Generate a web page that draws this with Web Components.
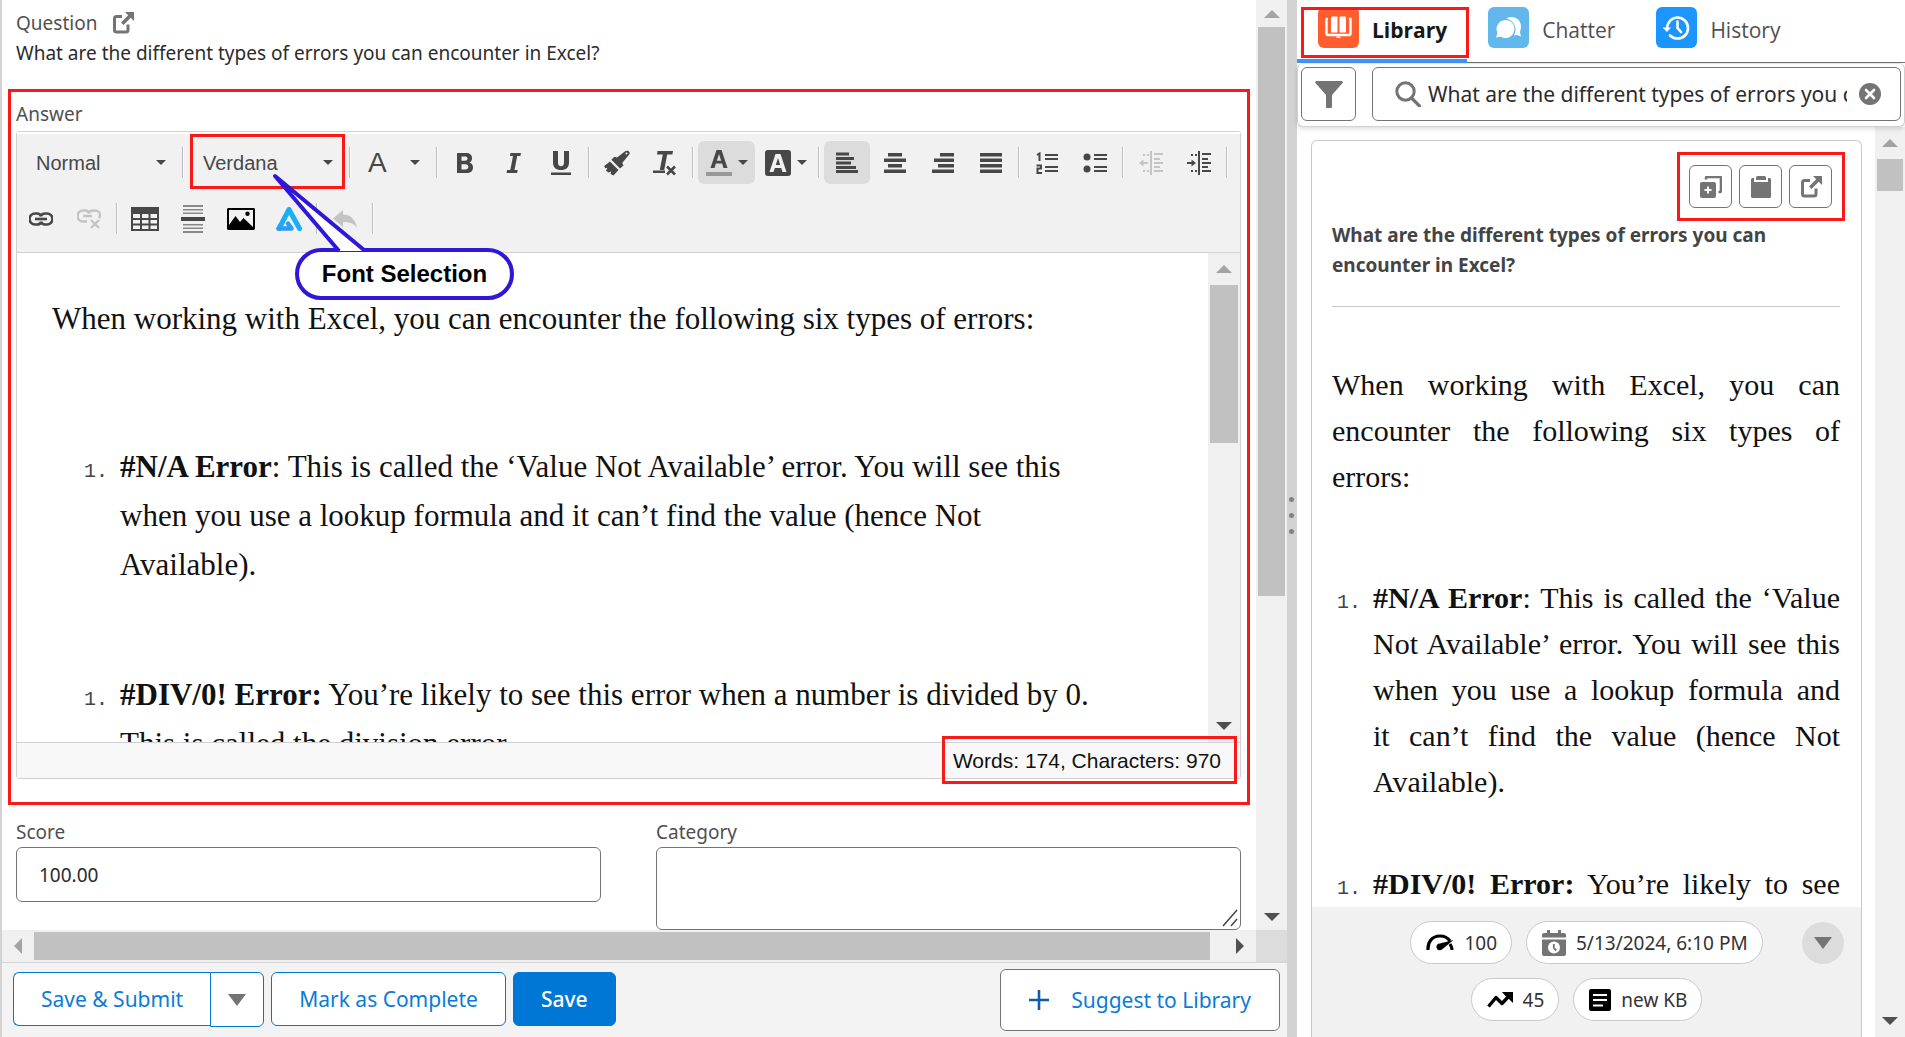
<!DOCTYPE html>
<html lang="en">
<head>
<meta charset="utf-8">
<title>Answer editor</title>
<style>
  html, body { margin: 0; height: 100%; }
  body { font-family: "Noto Sans", "Open Sans", sans-serif; color: #222; background: #fff; overflow: hidden; }
</style>
</head>
<body>
<app-shell>
  <question-panel slot="main"></question-panel>
  <library-panel slot="side"></library-panel>
</app-shell>

<script>
const ICONS = {
  popout: ['0 0 22 22', '<path d="M10 4.500H4.500a2 2 0 0 0-2 2V18a2 2 0 0 0 2 2H14a2 2 0 0 0 2-2v-5.500" fill="none" stroke="currentColor" stroke-width="3"/><path d="M13 0h9v9l-3.200-3.200L11.500 13 9 10.500l7.200-7.300z"/>'],
  caret: ['0 0 10 5', '<path d="M0 0h10L5 5z"/>'],
  bigcaret: ['0 0 18 12', '<path d="M0 0h18L9 12z"/>'],
  grip: ['0 0 16 18', '<path d="M1 17L15 1M9 17l6-7" fill="none" stroke="currentColor" stroke-width="1.500"/>'],
  bold: ['0 0 22 22', '<path fill-rule="evenodd" d="M3 1h9c4 0 6 2 6 5.200 0 2-1 3.700-2.700 4.300 2.400.6 3.700 2.500 3.700 4.900C19 19 16.500 21 12.500 21H3zM7.500 4.500v4.300h3.300c1.800 0 2.700-.7 2.700-2.200s-.9-2.100-2.700-2.100zm0 7.700v5.200h3.800c2 0 3-.9 3-2.600s-1-2.600-3-2.600z"/>'],
  italic: ['0 0 22 22', '<path d="M8.500 1H19l-.6 3h-3.200l-2.700 14h3.200l-.6 3H4.500l.6-3h3.200L11 4H7.900z"/>'],
  underline: ['0 0 22 24', '<path d="M3 0h5v11c0 3 1 4.200 3 4.200s3-1.200 3-4.200V0h5v11.500c0 5-3 7.500-8 7.500s-8-2.500-8-7.500zM1 21.500h20V24H1z"/>'],
  brush: ['0 0 26 26', '<path d="M23 .8a2.300 2.300 0 0 1 2.200 3.600l-7 8.600 1.300 2.500-3.500 3-8.600-8.700 3-3 2.700.7 8-6.200c.5-.4 1.200-.6 1.900-.5z"/><path d="M6 11.500l8.500 8.600-5 5.400-3-1.500.6-2.400-2.700 1L2 20.500l1.500-2.700-2.300.4L.2 16z"/><circle cx="22.500" cy="3.500" r="1" fill="#fff"/>'],
  clear: ['0 0 24 26', '<path d="M4.500 1H20l-.6 3.500h-5.200L11.200 20H6.800L9.800 4.500H4z"/><path d="M0 20.500h12V23H0z"/><path d="M14 16.500l8 8m0-8l-8 8" stroke="currentColor" stroke-width="2.600"/>'],
  fore: ['0 0 26 26', '<path fill-rule="evenodd" d="M10.500 0h5L21.500 18h-4l-1.400-4.500H9.800L8.500 18h-4zM13 4l-2.200 6.700h4.400z"/><path fill="#999" d="M0 22h26v4H0z"/>'],
  back: ['0 0 26 26', '<path fill-rule="evenodd" d="M3 0h20q3 0 3 3v20q0 3-3 3H3q-3 0-3-3V3q0-3 3-3zM10.500 4L4.500 22h4l1.300-4h6.400l1.300 4h4L15.500 4zM13 8l2.200 7h-4.400z"/>'],
  left: ['0 0 22 22', '<path d="M0 1h13v3H0zM0 5.500h18v3H0zM0 10h15v3H0zM0 14.500h20v3H0zM0 18.500h22v3H0z" transform="translate(0 -.5)"/>'],
  center: ['0 0 22 22', '<path d="M4 1h14v3.500H4zM0 6.500h22V10H0zM4 12h14v3.500H4zM0 17.500h22V21H0z"/>'],
  right: ['0 0 22 22', '<path d="M8 1h14v3.500H8zM2 6.500h20V10H2zM6 12h16v3.500H6zM0 17.500h22V21H0z"/>'],
  justify: ['0 0 22 22', '<path d="M0 1h22v3.500H0zM0 6.500h22V10H0zM0 12h22v3.500H0zM0 17.500h22V21H0z"/>'],
  numbers: ['0 0 22 22', '<path d="M9 2h13v2H9zM9 6h13v2H9zM9 14h13v2H9zM9 18h13v2H9z"/><path d="M1 3l2.500-1.500V9M.5 13.500H5v3H1.500V21H6" fill="none" stroke="currentColor" stroke-width="2"/>'],
  bullets: ['0 0 24 22', '<path d="M11 2h13v2H11zM11 6h13v2H11zM11 14h13v2H11zM11 18h13v2H11z"/><circle cx="4" cy="5" r="3.500"/><circle cx="4" cy="17" r="3.500"/>'],
  outdent: ['0 0 24 24', '<path d="M11 0h2v24h-2zM15 2h9v2h-9zM15 7h6v2h-6zM15 11h9v2h-9zM15 15h6v2h-6zM15 19h9v2h-9zM4 3h2v2H4zM8 3h2v2H8zM4 19h2v2H4zM8 19h2v2H8zM0 12l4.500-3.500V11H9v2H4.500v2.500z"/>'],
  indent: ['0 0 24 24', '<path d="M11 0h2v24h-2zM15 2h9v2h-9zM15 7h6v2h-6zM15 11h9v2h-9zM15 15h6v2h-6zM15 19h9v2h-9zM4 3h2v2H4zM8 3h2v2H8zM4 19h2v2H4zM8 19h2v2H8zM9 12L4.500 8.500V11H0v2h4.500v2.500z"/>'],
  link: ['0 0 24 14', '<g fill="none" stroke="currentColor" stroke-width="2.600"><path d="M12 4.500C11.500 2.500 10 1.500 8 1.500H6a5 5 0 0 0 0 11h2c2 0 3.500-1 4-2.500M12 9.500c.5 2 2 3 4 3h2a5 5 0 0 0 0-11h-2c-2 0-3.500 1-4 2.500"/><path d="M6 7h12"/></g>'],
  unlink: ['0 0 24 20', '<g fill="none" stroke="currentColor" stroke-width="2.400"><path d="M12 4.500C11.500 2.500 10 1.500 8 1.500H6a5 5 0 0 0 0 11h4M12 4c.5-1.500 2-2.500 4-2.500h2c3 0 5 2 5 4.500 0 1.500-.5 2.500-1 3M6 7h9"/><path d="M14 11l8 8m0-8l-8 8"/></g>'],
  table: ['0 0 28 24', '<path fill-rule="evenodd" d="M0 0h28v24H0zM2 7v4h7V7zm9 0v4h6.500V7zm8.500 0v4H26V7zM2 13v3.500h7V13zm9 0v3.500h6.500V13zm8.500 0v3.500H26V13zM2 18.500V22h7v-3.500zm9 0V22h6.500v-3.500zm8.500 0V22H26v-3.500z"/>'],
  rule: ['0 0 24 28', '<path fill="#888" d="M2 0h20v2H2zM2 4h20v1.500H2zM2 7.500h20V9H2zM2 19h20v1.500H2zM2 22.500h20V24H2zM2 26h20v2H2z"/><path d="M0 12h24v4H0z"/>'],
  image: ['0 0 28 22', '<path fill="#000" fill-rule="evenodd" d="M1 0h26l1 1v20l-1 1H1l-1-1V1zM2 2v15l6.500-9 4.500 6 3.500-4L26 19V2z"/><circle cx="20.500" cy="5.800" r="2.200" fill="#000"/>'],
  brand: ['0 0 26 24', '<path d="M13 2.500L3 21.500M13 2.500l10.500 19" stroke="#18aef8" stroke-width="5" stroke-linecap="round" fill="none"/><path d="M2.500 21.500h13l-3.500-5" stroke="#2f9bf4" stroke-width="4.500" stroke-linecap="round" stroke-linejoin="round" fill="none"/>'],
  undo: ['0 0 24 18', '<path d="M10 0v4.500c7 0 12 4 14 13-4-4.500-8-5.500-14-5.500V17L0 8.500z"/>'],
  library: ['0 0 41 41', '<rect width="41" height="41" rx="6" fill="#ff5d2d"/><g fill="#fff"><rect x="13" y="9.500" width="6.500" height="16" rx="1"/><rect x="21.500" y="9.500" width="6.500" height="16" rx="1"/><path d="M18.500 29.500h4v1.500h-4z"/></g><path d="M9 12h-.5v14.500c0 1 .5 1.500 1.500 1.500h21c1 0 1.500-.5 1.500-1.500V12H32" fill="none" stroke="#fff" stroke-width="2.400" stroke-linecap="round"/>'],
  chatter: ['0 0 41 41', '<rect width="41" height="41" rx="6" fill="#62b7ed"/><path d="M18.500 11.500c6-4 14.500 0 14.500 8 0 3-1 4-1 6l1 4-4-1.500-3 .5c4-7 0-15-7.500-17z" fill="#fff"/><path d="M17 13a9 9 0 1 1-4.500 16.500l-4.500 1 1.500-4.500A9 9 0 0 1 17 13z" fill="#fff"/>'],
  history: ['0 0 41 41', '<rect width="41" height="41" rx="6" fill="#1b96ff"/><path d="M11 22c0-7 5-11.500 10.500-11.500S32 15 32 21s-4.500 10.500-10.500 10.500c-3 0-5.500-1-7.500-3M21.500 14.500V21l3.500 4" fill="none" stroke="#fff" stroke-width="2.600" stroke-linecap="round"/><path d="M6.500 20.500h8.500L11 25z" fill="#fff"/>'],
  filter: ['0 0 28 27', '<path d="M1 0h26l1 1.500L17 14v12a1 1 0 0 1-1 1h-4a1 1 0 0 1-1-1V14L0 1.500z"/>'],
  search: ['0 0 26 26', '<circle cx="10.500" cy="10.500" r="8.700" fill="none" stroke="currentColor" stroke-width="3"/><path d="M16.500 17l8 8" stroke="currentColor" stroke-width="3.200" stroke-linecap="round"/>'],
  close: ['0 0 22 22', '<circle cx="11" cy="11" r="11"/><path d="M7 7l8 8m0-8l-8 8" stroke="#fff" stroke-width="2.600" stroke-linecap="round"/>'],
  copyadd: ['0 0 22 22', '<path d="M6 3.500V2a1 1 0 0 1 1-1h13a1 1 0 0 1 1 1v13a1 1 0 0 1-1 1h-1.500" fill="none" stroke="currentColor" stroke-width="2.600"/><path fill-rule="evenodd" d="M2 6h12a2 2 0 0 1 2 2v12a2 2 0 0 1-2 2H2a2 2 0 0 1-2-2V8a2 2 0 0 1 2-2zm5 4.500V13H4.500v2H7v2.500h2V15h2.500v-2H9v-2.500z"/>'],
  clipboard: ['0 0 22 22', '<path d="M7.500 0h7a1.500 1.500 0 0 1 1.500 1.500V4H6V1.500A1.500 1.500 0 0 1 7.500 0z"/><path d="M2.500 2H4v4h14V2h1.500A1.500 1.500 0 0 1 21 3.500v17a1.500 1.500 0 0 1-1.500 1.500h-17A1.500 1.500 0 0 1 1 20.500v-17A1.500 1.500 0 0 1 2.500 2z"/>'],
  gauge: ['0 0 28 18', '<path d="M2 16C1.500 8 6 2 14 2c5 0 8 2 10 5" fill="none" stroke="#000" stroke-width="3.200"/><path d="M27.500 6L16 15.500a3.400 3.400 0 1 1-2-6z" fill="#000"/><path d="M24 10c1.200 2 2 4 2 6" stroke="#000" stroke-width="3.200" fill="none"/>'],
  date: ['0 0 24 26', '<path d="M5 0h3v3h8V0h3v3h3a2 2 0 0 1 2 2v2.500H0V5a2 2 0 0 1 2-2h3z"/><path d="M0 9.500h24V24a2 2 0 0 1-2 2H2a2 2 0 0 1-2-2z"/><circle cx="12" cy="17.500" r="6" fill="#fff"/><path d="M11.800 14v4l2.500 2.500" fill="none" stroke="currentColor" stroke-width="1.800"/>'],
  trend: ['0 0 26 16', '<path d="M1.500 14.500l7.500-9 6 6 7-7.500" fill="none" stroke="#000" stroke-width="3.400" stroke-linejoin="round"/><path d="M15 0h11v11l-3.500-3.500L18.500 4z" fill="#000"/>'],
  article: ['0 0 22 22', '<path fill="#000" fill-rule="evenodd" d="M2 0h18a2 2 0 0 1 2 2v18a2 2 0 0 1-2 2H2a2 2 0 0 1-2-2V2a2 2 0 0 1 2-2zm2 5v2h14V5zm0 5v2h14v-2zm0 5.500v2h10v-2z"/>'],
  plus: ['0 0 20 20', '<path d="M8.700 0h2.600v8.700H20v2.600h-8.700V20H8.700v-8.700H0V8.700h8.700z"/>'],
};

const define = (name, markup) => customElements.define(name, class extends HTMLElement {
  constructor() {
    super();
    const t = document.createElement('template');
    t.innerHTML = typeof markup === 'function' ? markup(this) : markup;
    this.attachShadow({ mode: 'open' }).append(t.content);
  }
});

define('ui-icon', el => {
  const [box, body] = ICONS[el.getAttribute('name')];
  const w = el.getAttribute('w') || box.split(' ')[2];
  return `<style>:host{display:inline-flex;flex:none}svg{display:block;fill:currentColor}</style>
  <svg width="${w}" viewBox="${box}" aria-hidden="true">${body}</svg>`;
});

define('scroll-bar', el => {
  const v = !el.hasAttribute('horizontal');
  return `<style>
  :host{display:flex;flex-direction:${v ? 'column' : 'row'};background:#f0f0f0;flex:none;box-sizing:border-box;
    ${v ? 'width:var(--size,30px)' : 'height:32px'}}
  button{border:0;padding:0;background:none;flex:none;display:flex;align-items:center;justify-content:center;
    ${v ? 'height:var(--cap,32px);width:100%' : 'width:32px;height:100%'};color:#a3a3a3}
  button:last-child{color:#505050}
  .track{flex:1;display:flex;flex-direction:inherit;min-height:0;min-width:0}
  .thumb{background:#c1c1c1;${v ? 'margin:0 2px;height' : 'margin:2px 0;width'}:var(--thumb)}
  </style>
  <button type="button" tabindex="-1" aria-label="Scroll back"><svg width="16" height="16" fill="currentColor"><path d="${v ? 'M0 12h16L8 4z' : 'M12 0v16L4 8z'}"/></svg></button>
  <div class="track"><div class="thumb"></div></div>
  <button type="button" tabindex="-1" aria-label="Scroll forward"><svg width="16" height="16" fill="currentColor"><path d="${v ? 'M0 4h16l-8 8z' : 'M4 0v16l8-8z'}"/></svg></button>`;
});

define('mark-frame', `<style>:host{position:absolute;border:3px solid #fb1818;pointer-events:none;z-index:2}</style>`);

define('call-out', `<style>
  :host{position:absolute;z-index:3;pointer-events:none;width:219px;height:52px}
  .bubble{box-sizing:border-box;width:100%;height:100%;border:4px solid #2f17d8;border-radius:26px;background:#fff;color:#000;
    display:flex;align-items:center;justify-content:center;font:bold 24px "Liberation Sans",sans-serif}
  svg{position:absolute;left:-24px;bottom:100%;margin-bottom:-5px;overflow:visible}
  </style>
  <div class="bubble"><slot></slot></div>
  <svg width="94" height="80" viewBox="0 0 94 80"><path d="M4 3L69 78H92z" fill="#fff"/><path d="M68 78L4 3 93 77" fill="none" stroke="#2f17d8" stroke-width="4" stroke-linejoin="round"/></svg>`);

define('tool-button', el => `<style>
  :host{display:block;flex:none}
  button{box-sizing:border-box;width:${el.hasAttribute('menu') ? 57 : 46}px;height:43px;border:0;padding:0;border-radius:6px;background:${el.hasAttribute('on') ? '#dcdcdc' : 'none'};
    color:#474747;display:flex;align-items:center;justify-content:center;gap:6px}
  :host([off]) button{color:#c4c4c4}
  </style>
  <button type="button" aria-label="${el.getAttribute('label')}"${el.hasAttribute('off') ? ' disabled' : ''}><ui-icon name="${el.getAttribute('icon')}"></ui-icon>${el.hasAttribute('menu') ? '<ui-icon name="caret"></ui-icon>' : ''}</button>`);

define('tool-divider', `<style>:host{display:block;flex:none;width:2px;height:31px;margin:0 2px;background:linear-gradient(90deg,#bcbcbc 1px,#fff 1px)}</style>`);

define('tool-select', el => `<style>
  :host{display:flex;position:relative;flex:none;width:var(--w,157px);height:43px;color:#474747}
  select{appearance:none;width:100%;border:0;background:none;color:inherit;padding:0 30px 0 var(--inset,15px);font:${el.getAttribute('size') || 20}px "Liberation Sans",sans-serif}
  ui-icon{position:absolute;right:12px;top:19px;pointer-events:none}
  </style>
  <select aria-label="${el.getAttribute('label')}"><option>${el.getAttribute('value')}</option></select><ui-icon name="caret"></ui-icon><slot></slot>`);

define('kb-article', `<style>
  :host{display:block;font-family:"Liberation Serif",serif;color:#111}
  p{margin:0}
  ol{margin:var(--first-gap) 0 0;padding:0 0 0 var(--indent)}
  ol+ol{margin-top:var(--next-gap)}
  li::marker{font:20px "Liberation Mono",monospace;color:#444}
  </style>
  <p>When working with Excel, you can encounter the following six types of errors:</p>
  <ol><li><b>#N/A Error</b>: This is called the ‘Value Not Available’ error. You will see this when you use a lookup formula and it&nbsp;can’t find the value (hence Not Available).</li></ol>
  <ol><li><b>#DIV/0! Error:</b> You’re likely to see this error when a number is divided by 0. This is called the division error.</li></ol>`);

define('rich-editor', `<style>
  :host{display:block;border:1px solid #d1d1d1;border-radius:3px;position:relative}
  .tools{background:#f1f1f1;border-top:2px solid #fff;border-bottom:1px solid #d1d1d1;padding:7px 0 12px 1px;display:flex;flex-direction:column;gap:13px}
  .row{display:flex;align-items:center;gap:2px}
  .body{display:flex;height:489px}
  .text{flex:1;min-width:0;overflow:hidden;padding:41px 108px 0 35px;box-sizing:border-box}
  kb-article{font-size:31px;line-height:49px;--first-gap:99px;--next-gap:81px;--indent:68px}
  scroll-bar{--size:32px;--thumb:158px}
  .status{position:relative;border-top:1px solid #d1d1d1;background:#f8f8f8;height:35px;display:flex;align-items:center;justify-content:flex-end;
    padding-right:19px;font:21px "Liberation Sans",sans-serif;color:#111}
  .status mark-frame{left:calc(100% - 298px);right:3px;top:-7px;bottom:-6px}
  tool-select mark-frame{inset:-7px 0 -5px 2px}
  call-out{left:278px;top:116px}
  </style>
  <div class="tools">
    <div class="row">
      <tool-select label="Paragraph style" value="Normal" style="--w:160px;--inset:18px"></tool-select><tool-divider></tool-divider>
      <tool-select label="Font" value="Verdana"><mark-frame></mark-frame></tool-select><tool-divider></tool-divider>
      <tool-select label="Font size" value="A" size="28" style="--w:77px;--inset:13px"></tool-select><tool-divider></tool-divider>
      <tool-button icon="bold" label="Bold"></tool-button><tool-button icon="italic" label="Italic"></tool-button><tool-button icon="underline" label="Underline"></tool-button><tool-divider></tool-divider>
      <tool-button icon="brush" label="Copy formatting"></tool-button><tool-button icon="clear" label="Remove format"></tool-button><tool-divider></tool-divider>
      <tool-button icon="fore" label="Text color" menu on></tool-button><tool-button icon="back" label="Background color" menu></tool-button><tool-divider></tool-divider>
      <tool-button icon="left" label="Align left" on></tool-button><tool-button icon="center" label="Center"></tool-button><tool-button icon="right" label="Align right"></tool-button><tool-button icon="justify" label="Justify"></tool-button><tool-divider></tool-divider>
      <tool-button icon="numbers" label="Numbered list"></tool-button><tool-button icon="bullets" label="Bulleted list"></tool-button><tool-divider></tool-divider>
      <tool-button icon="outdent" label="Decrease indent" off></tool-button><tool-button icon="indent" label="Increase indent"></tool-button><tool-divider></tool-divider>
    </div>
    <div class="row">
      <tool-button icon="link" label="Link"></tool-button><tool-button icon="unlink" label="Unlink" off></tool-button><tool-divider></tool-divider>
      <tool-button icon="table" label="Table"></tool-button><tool-button icon="rule" label="Horizontal line"></tool-button><tool-button icon="image" label="Image"></tool-button><tool-button icon="brand" label="Assistant"></tool-button><tool-divider></tool-divider>
      <tool-button icon="undo" label="Undo" off></tool-button><tool-divider></tool-divider>
    </div>
  </div>
  <div class="body"><div class="text"><kb-article></kb-article></div><scroll-bar></scroll-bar></div>
  <div class="status"><span>Words: 174, Characters: 970</span><mark-frame></mark-frame></div>
  <call-out>Font Selection</call-out>`);

define('question-panel', `<style>
  :host{display:flex;flex-direction:column;height:100%;border-left:2px solid #d3d3d3;box-sizing:border-box}
  .top{flex:1;min-height:0;display:flex}
  .page{flex:1;min-width:0;overflow:hidden;padding-top:8px}
  .page,label{font-size:19px;line-height:30px}
  h2,label,.name{margin:0;font-weight:400;font-size:19px;color:#505050}
  .head{display:flex;align-items:center;gap:15px;padding-left:14px}
  .head a{color:#747474;display:flex}
  .q{margin:0;padding-left:14px;color:#2b2b2b}
  section{margin:21px 6px 0;border:3px solid #fb1818;padding:7px 6px 23px 5px}
  section h2{margin-bottom:2px}
  .fields{display:grid;grid-template-columns:1fr 1fr;gap:55px;padding:12px 15px 0 14px}
  .fields div{display:flex;flex-direction:column;position:relative}
  .fields ui-icon{position:absolute;right:3px;bottom:3px;color:#444;pointer-events:none}
  input,textarea{box-sizing:border-box;width:100%;border:1px solid #747474;border-radius:6px;background:#fff;padding:0 22px;font:inherit;font-size:19px;color:#2b2b2b;height:55px;margin:0}
  textarea{height:83px;resize:none}
  .bottom{display:flex;flex:none}
  .bottom scroll-bar{flex:1;--thumb:calc(100% - 14px)}
  .corner{width:31px;background:#dcdcdc}
  footer{flex:none;height:75px;box-sizing:border-box;background:#f3f3f3;border-top:1px solid #d4d4d4;display:flex;padding:9px 7px 0 11px;align-items:flex-start}
  footer button{box-sizing:border-box;height:54px;border:1px solid #0077d6;border-radius:6px;background:#fff;color:#0b7bd8;font:21px "Noto Sans",sans-serif;padding:0 27px;margin-right:7px;white-space:nowrap}
  footer .join{border-radius:6px 0 0 6px;margin-right:0;border-right:0}
  footer .menu{border-radius:0 6px 6px 0;width:54px;padding:0;display:flex;align-items:center;justify-content:center;color:#747474;height:55px}
  footer .main{background:#0077d6;color:#fff;font-weight:500}
  footer .suggest{margin:-3px 0 0 auto;height:62px;border-color:#747474;display:flex;align-items:center;gap:22px;padding:0 28px}
  .suggest ui-icon{color:#0b5cab}
  </style>
  <div class="top">
    <div class="page">
      <div class="head"><span class="name">Question</span><a href="#question" aria-label="Open question"><ui-icon name="popout"></ui-icon></a></div>
      <p class="q">What are the different types of errors you can encounter in Excel?</p>
      <section><h2>Answer</h2><rich-editor></rich-editor></section>
      <div class="fields">
        <div><label for="score">Score</label><input id="score" value="100.00"></div>
        <div><label for="category">Category</label><textarea id="category"></textarea><ui-icon name="grip"></ui-icon></div>
      </div>
    </div>
    <scroll-bar style="--size:31px;--cap:27px;--thumb:65%"></scroll-bar>
  </div>
  <div class="bottom"><scroll-bar horizontal></scroll-bar><div class="corner"></div></div>
  <footer>
    <button type="button" class="join">Save &amp; Submit</button><button type="button" class="menu" aria-label="More save options"><ui-icon name="bigcaret"></ui-icon></button>
    <button type="button">Mark as Complete</button>
    <button type="button" class="main">Save</button>
    <button type="button" class="suggest"><ui-icon name="plus"></ui-icon>Suggest to Library</button>
  </footer>`);

define('nav-tab', el => `<style>
  :host{display:block;position:relative}
  a{display:flex;align-items:flex-start;gap:13px;height:63px;box-sizing:border-box;padding:7px 20px 0 21px;text-decoration:none;color:#505050;font:21px/47px "Open Sans",sans-serif;
    border-bottom:${el.hasAttribute('selected') ? '4px solid #4392f5' : '1px solid #747474'}}
  :host([selected]) a{font-weight:700;color:#181818}
  mark-frame{left:4px;top:7px;right:-2px;bottom:5px}
  </style>
  <a href="#${el.getAttribute('icon')}"><ui-icon name="${el.getAttribute('icon')}"></ui-icon><slot></slot></a>${el.hasAttribute('selected') ? '<mark-frame></mark-frame>' : ''}`);

define('meta-pill', el => `<style>
  :host{display:flex;align-items:center;gap:10px;height:43px;box-sizing:border-box;border:1px solid #c9c9c9;border-radius:22px;background:#fff;padding:0 14px 0 15px;font-size:19px;color:#333;white-space:nowrap}
  ui-icon{color:#747474}
  </style><ui-icon name="${el.getAttribute('icon')}"></ui-icon><slot></slot>`);

define('library-panel', `<style>
  :host{display:flex;flex-direction:column;height:100%;min-width:0}
  nav{display:flex;flex:none}
  nav span{flex:1;border-bottom:1px solid #747474}
  .find{flex:none;display:flex;gap:16px;padding:3px 3px 5px;border:1px solid #d0d0d0;border-top-color:#e4e4e4;border-radius:6px;box-shadow:0 2px 5px #0002;position:relative;background:#fff}
  .find>button,.box{box-sizing:border-box;height:54px;border:1px solid #747474;border-radius:6px;background:#fff}
  .find>button{width:55px;padding:0;display:flex;align-items:center;justify-content:center;color:#747474}
  .box{flex:1;min-width:0;display:flex;align-items:center;padding:0 19px 0 22px;gap:7px;color:#747474}
  .box input{flex:1;min-width:0;border:0;padding:0;background:none;font:21px "Noto Sans",sans-serif;color:#2b2b2b;outline:0}
  .box button{border:0;background:none;padding:0;margin-left:5px;color:#747474;display:flex}
  .wrap{flex:1;min-height:0;display:flex}
  .area{flex:1;min-width:0;padding:13px 13px 0 14px;display:flex}
  article{flex:1;min-width:0;border:1px solid #c9c9c9;border-bottom:0;border-radius:6px 6px 0 0;display:flex;flex-direction:column;position:relative}
  .content{flex:1;min-height:0;overflow:hidden;padding:24px 21px 0 20px}
  .actions{display:flex;justify-content:flex-end;gap:7px;padding-right:8px}
  .actions div{display:flex;gap:7px;position:relative}
  .actions button{box-sizing:border-box;width:43px;height:43px;border:1px solid #747474;border-radius:6px;background:#fff;padding:0;color:#747474;display:flex;align-items:center;justify-content:center}
  .actions mark-frame{inset:-13px -13px -13px -12px}
  h3{margin:12px 0 0;font-size:19px;line-height:30px;font-weight:700;color:#444}
  hr{border:0;border-top:1px solid #c9c9c9;margin:26px 0 55px}
  kb-article{font-size:30px;line-height:46px;text-align:justify;--first-gap:75px;--next-gap:56px;--indent:41px}
  .meta{flex:none;height:130px;box-sizing:border-box;background:#f1f1f1;padding-top:14px;display:grid;grid-template-columns:1fr auto 1fr;grid-auto-rows:43px;row-gap:14px;align-items:center}
  .meta div{display:flex;gap:14px;grid-column:2;justify-content:center}
  .meta button{justify-self:end;margin-right:17px;width:42px;height:42px;border:0;border-radius:50%;background:#dcdcdc;color:#747474;display:flex;align-items:center;justify-content:center;padding:0}
  .wrap scroll-bar{--thumb:32px}
  </style>
  <nav aria-label="Panels"><nav-tab icon="library" selected>Library</nav-tab><nav-tab icon="chatter">Chatter</nav-tab><nav-tab icon="history">History</nav-tab><span></span></nav>
  <div class="find">
    <button type="button" aria-label="Filter"><ui-icon name="filter"></ui-icon></button>
    <div class="box"><ui-icon name="search"></ui-icon><input type="text" aria-label="Search library" value="What are the different types of errors you can encounter in Excel?"><button type="button" aria-label="Clear"><ui-icon name="close"></ui-icon></button></div>
  </div>
  <div class="wrap">
    <div class="area">
      <article>
        <div class="content">
          <div class="actions"><div>
            <button type="button" aria-label="Copy and add"><ui-icon name="copyadd"></ui-icon></button>
            <button type="button" aria-label="Copy to clipboard"><ui-icon name="clipboard"></ui-icon></button>
            <button type="button" aria-label="Open"><ui-icon name="popout"></ui-icon></button>
            <mark-frame></mark-frame></div></div>
          <h3>What are the different types of errors you can encounter in Excel?</h3>
          <hr>
          <kb-article></kb-article>
        </div>
        <div class="meta">
          <div><meta-pill icon="gauge">100</meta-pill><meta-pill icon="date">5/13/2024, 6:10 PM</meta-pill></div>
          <button type="button" aria-label="Show more"><ui-icon name="bigcaret"></ui-icon></button>
          <div><meta-pill icon="trend">45</meta-pill><meta-pill icon="article">new KB</meta-pill></div>
        </div>
      </article>
    </div>
    <scroll-bar></scroll-bar>
  </div>`);

define('app-shell', `<style>
  :host{display:grid;grid-template-columns:minmax(0,1287fr) 10px minmax(0,608fr);grid-template-rows:minmax(0,1fr);height:100vh}
  .split{background:#d3d3d3;display:flex;flex-direction:column;align-items:center;justify-content:center;gap:11px;box-sizing:border-box;padding:0 2px 6px 0}
  .split i{width:5px;height:5px;border-radius:50%;background:#808080}
  </style>
  <slot name="main"></slot><div class="split"><i></i><i></i><i></i></div><slot name="side"></slot>`);
</script>
</body>
</html>
